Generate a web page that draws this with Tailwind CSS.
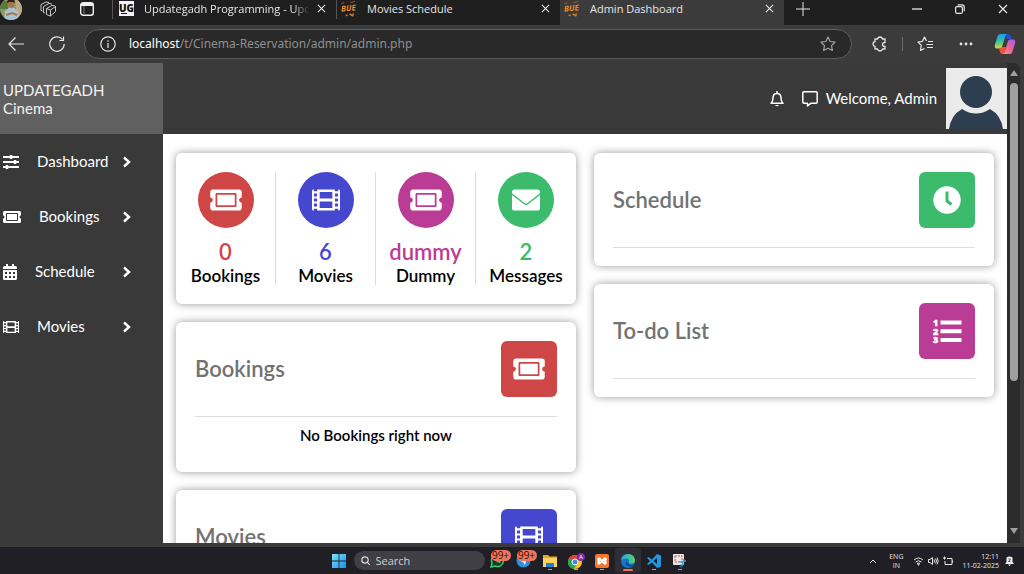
<!DOCTYPE html>
<html lang="en">

<head>
    <meta charset="UTF-8">
    <meta name="viewport" content="width=device-width, initial-scale=1.0">
    <script src="https://cdn.jsdelivr.net/npm/@tailwindcss/browser@4"></script>
    <title>Admin Dashboard</title>
</head>

<body class="h-screen flex flex-col overflow-hidden bg-[#3b3b3b] font-['Open_Sans','Noto_Sans',sans-serif] text-[#e6e6e6]">

    <!-- Shared icons -->
    <svg class="hidden">
        <symbol id="ticket" viewBox="0 0 576 512">
            <path d="M128 160h320v192H128V160zm400 96c0 26.51 21.49 48 48 48v96c0 26.51-21.49 48-48 48H48c-26.51 0-48-21.49-48-48v-96c26.51 0 48-21.49 48-48s-21.49-48-48-48v-96c0-26.51 21.49-48 48-48h480c26.51 0 48 21.49 48 48v96c-26.51 0-48 21.49-48 48zm-48-104c0-13.255-10.745-24-24-24H120c-13.255 0-24 10.745-24 24v208c0 13.255 10.745 24 24 24h336c13.255 0 24-10.745 24-24V152z" />
        </symbol>
        <symbol id="film" viewBox="0 0 512 512">
            <path fill-rule="evenodd" d="M24 64h8v20q0 12 12 12h40q12 0 12-12V64h320v20q0 12 12 12h40q12 0 12-12V64h8q24 0 24 24v336q0 24-24 24h-8v-20q0-12-12-12h-40q-12 0-12 12v20H96v-20q0-12-12-12H44q-12 0-12 12v20h-8q-24 0-24-24V88q0-24 24-24zM36 136v56h56v-56zM36 228v56h56v-56zM36 320v56h56v-56zM420 136v56h56v-56zM420 228v56h56v-56zM420 320v56h56v-56zM148 108h216q8 0 8 8v104q0 8-8 8H148q-8 0-8-8V116q0-8 8-8zM148 284h216q8 0 8 8v104q0 8-8 8H148q-8 0-8-8V292q0-8 8-8z" />
        </symbol>
        <symbol id="chevron" viewBox="0 0 10 14">
            <path d="M2 2.500l5 4.500-5 4.500" fill="none" stroke="currentColor" stroke-width="2.400" />
        </symbol>
        <symbol id="close" viewBox="0 0 10 10">
            <path d="M1 1l8 8M9 1l-8 8" fill="none" stroke="currentColor" stroke-width="1.200" />
        </symbol>
        <symbol id="bue" viewBox="0 0 16 16">
            <g transform="rotate(-6 8 8)">
                <text x="0" y="10" font-size="8" font-weight="bold" font-style="italic" font-family="Open Sans, sans-serif" fill="#e8892b">BUE</text>
                <path d="M1 2l3-1M10 2l5-1" stroke="#9a5a1c" />
                <path d="M4 14h2M8 13l3 2 1-2" stroke="#d97b22" stroke-width="1.500" fill="none" />
            </g>
        </symbol>
    </svg>

    <!-- Tab strip -->
    <header class="h-[25px] shrink-0 flex bg-[#1f1f1f] text-[11px] leading-4">
        <div class="w-28 shrink-0 flex items-center pb-2">
            <button class="w-6 h-4 flex items-center" aria-label="Profile">
                <svg class="w-[22px] h-6" viewBox="0 0 22 24">
                    <clipPath id="round"><circle cx="11" cy="12" r="11" /></clipPath>
                    <g clip-path="url(#round)">
                        <rect width="22" height="24" fill="#8c9a62" />
                        <path d="M0 4h8v8H0z" fill="#5c7a3c" />
                        <path d="M15 3h8v20h-6z" fill="#b8ab86" />
                        <path d="M4 24l1-10 4-3h5l4 3 1 10z" fill="#a9c4d6" />
                        <circle cx="11" cy="7" r="3.500" fill="#a8744f" />
                        <path d="M7 6q0-4 4-4t4 4l-2-1H9z" fill="#2a211d" />
                        <path d="M6 18l6-2 5 2" stroke="#a8744f" stroke-width="2" fill="none" />
                    </g>
                </svg>
            </button>
            <button class="ml-4" aria-label="Workspaces">
                <svg class="size-4" viewBox="0 0 16 16" fill="none" stroke="#c9c9c9" stroke-linejoin="round">
                    <path d="M6.500 7.500L12 4.500q3.500 0 3.500 1v5L10.500 15l-4-1.500zM6.500 7.500l4 1.500 5-3.500M10.500 9v6M5 12l-1.500-.500v-6L9 2.500l3 .500M2.500 10L1 9.500v-6L6 1l3 .500" />
                </svg>
            </button>
            <button class="ml-6" aria-label="Tab actions">
                <svg class="w-[14px] h-[14px]" viewBox="0 0 14 14" fill="none" stroke="#f0f0f0">
                    <rect x=".700" y=".700" width="12.600" height="12.600" rx="2.500" stroke-width="1.400" />
                    <path d="M1 2.500h12" stroke-width="3" />
                    <path d="M4 4v9" stroke="#777" />
                </svg>
            </button>
        </div>
        <div class="w-56 shrink-0 flex items-center pb-2 pr-2.5">
            <span class="w-px h-5 bg-[#555]"></span>
            <svg class="ml-1.5 size-[15px]" viewBox="0 0 15 15">
                <rect width="15" height="15" fill="#f4f4f4" />
                <text x="7.500" y="11" text-anchor="middle" font-size="10" font-weight="800" font-family="Open Sans, sans-serif" fill="#111">UG</text>
                <path d="M2 12.500h6" stroke="#111" />
            </svg>
            <span class="ml-2.5 flex-1 overflow-hidden whitespace-nowrap mask-r-from-90%">Updategadh Programming - Upda</span>
            <button class="ml-2" aria-label="Close tab"><svg class="size-[9px]"><use href="#close" /></svg></button>
        </div>
        <div class="w-56 shrink-0 flex items-center pb-2 pr-2.5">
            <span class="w-px h-5 bg-[#555]"></span>
            <svg class="ml-1 size-4"><use href="#bue" /></svg>
            <span class="ml-2.5 flex-1 whitespace-nowrap">Movies Schedule</span>
            <button aria-label="Close tab"><svg class="size-[9px]"><use href="#close" /></svg></button>
        </div>
        <div class="w-56 shrink-0 flex items-center pb-2 pl-1 pr-2.5 bg-[#3b3b3b]">
            <svg class="size-4"><use href="#bue" /></svg>
            <span class="ml-2.5 flex-1 whitespace-nowrap">Admin Dashboard</span>
            <button aria-label="Close tab"><svg class="size-[9px]"><use href="#close" /></svg></button>
        </div>
        <div class="flex-1 flex items-center pb-2 pl-3 pr-4">
            <button aria-label="New tab">
                <svg class="size-[14px]" viewBox="0 0 14 14" stroke="currentColor"><path d="M7 0v14M0 7h14" /></svg>
            </button>
            <div class="ml-auto flex items-center gap-[33px]">
                <button aria-label="Minimize"><svg class="size-[10px]" viewBox="0 0 10 10" stroke="currentColor" stroke-width="1.300"><path d="M0 5h10" /></svg></button>
                <button aria-label="Restore">
                    <svg class="size-[10px]" viewBox="0 0 10 10" fill="none" stroke="currentColor" stroke-width="1.200"><rect x=".600" y="2.600" width="6.800" height="6.800" rx="1.500" /><path d="M2.600.800H7q2.200 0 2.200 2.200v4.200" /></svg>
                </button>
                <button aria-label="Close"><svg class="size-[10px]"><use href="#close" /></svg></button>
            </div>
        </div>
    </header>

    <!-- Toolbar -->
    <nav class="h-[38px] shrink-0 flex items-center pl-2 pr-2">
        <button aria-label="Back">
            <svg class="size-4" viewBox="0 0 16 16" fill="none" stroke="currentColor" stroke-width="1.200"><path d="M16 8H1M7.500 1.500L1 8l6.500 6.500" /></svg>
        </button>
        <button class="ml-[25px]" aria-label="Refresh">
            <svg class="size-4" viewBox="0 0 16 16" fill="none" stroke="currentColor" stroke-width="1.200"><path d="M15.200 8A7.200 7.200 0 1 1 13.500 3.400M14.500.500V4.500H10.500" /></svg>
        </button>
        <form class="ml-[19px] flex-1 h-[30px] flex items-center rounded-full bg-[#292929] border border-[#5c5c5c] px-[15px] font-['Noto_Sans',sans-serif] text-[12px]">
            <svg class="size-4" viewBox="0 0 16 16" fill="none" stroke="currentColor" stroke-width="1.200"><circle cx="8" cy="8" r="7.200" /><path d="M8 7v5M8 4.200v1.600" /></svg>
            <a href="#" class="ml-[13px] text-[#8f8f8f] whitespace-nowrap"><span class="text-white">localhost</span>/t/Cinema-Reservation/admin/admin.php</a>
            <button type="button" class="ml-auto" aria-label="Favorite">
                <svg class="size-4" viewBox="0 0 16 16" fill="none" stroke="#a0a0a0" stroke-width="1.200" stroke-linejoin="round"><path d="M8 1l2.100 4.500 4.900.700-3.500 3.400.900 4.900L8 12.200l-4.400 2.300.900-4.900L1 6.200l4.900-.700z" /></svg>
            </button>
        </form>
        <button class="ml-5" aria-label="Extensions">
            <svg class="size-4" viewBox="0 0 16 16" fill="none" stroke="currentColor" stroke-width="1.300" stroke-linejoin="round"><path d="M3 3h2.500q.500-2 2.500-2t2.500 2H13v3.500q-2.500 0-2.500 2t2.500 2V13h-2.500q-.500 2-2.500 2t-2.500-2H3v-2.500Q1 10 1 8t2-2.500z" /></svg>
        </button>
        <span class="ml-3.5 w-px h-[14px] bg-[#6a6a6a]"></span>
        <button class="ml-3.5" aria-label="Favorites">
            <svg class="size-4" viewBox="0 0 16 16" fill="none" stroke="currentColor" stroke-width="1.200" stroke-linejoin="round"><path d="M9.500 5L7.500 1 5.500 5.300 1 6l3.300 3.300L3.500 14.500l4-2M11 5.500h5M9.500 8.500H16M10 11.500h6" /></svg>
        </button>
        <button class="ml-[26px]" aria-label="Settings and more">
            <svg class="w-[14px] h-1" viewBox="0 0 14 4" fill="currentColor"><circle cx="2" cy="2" r="1.400" /><circle cx="7" cy="2" r="1.400" /><circle cx="12" cy="2" r="1.400" /></svg>
        </button>
        <button class="ml-[21px]" aria-label="Copilot">
            <svg class="w-[22px] h-5" viewBox="0 0 22 20">
                <defs>
                    <linearGradient id="cpA" x1="0" y1="0" x2="0" y2="1"><stop offset="0" stop-color="#1d9bf0" /><stop offset=".500" stop-color="#35c3a4" /><stop offset="1" stop-color="#e6d22e" /></linearGradient>
                    <linearGradient id="cpB" x1="1" y1="0" x2="0" y2="1"><stop offset="0" stop-color="#a25cf0" /><stop offset=".500" stop-color="#ef5f9c" /><stop offset="1" stop-color="#ff9a56" /></linearGradient>
                </defs>
                <path d="M11 0h3q2 0 2.600 2l1 3H13z" fill="#1f4fd8" />
                <path d="M6 0h8q-2 0-2.600 2L8 13q-.500 1.500-2.500 1.500H3Q0 14.500 1 10.500l2.500-8Q4.300 0 6 0z" fill="url(#cpA)" />
                <path d="M5 14.500q2.500 0 3-1.500h4l-2 7H8q-1.500 0-2-2z" fill="#f0503c" />
                <path d="M16 20H8q2 0 2.600-2L14 7q.500-1.500 2.500-1.500H19q3 0 2 4l-2.500 8Q17.700 20 16 20z" fill="url(#cpB)" />
            </svg>
        </button>
    </nav>

    <!-- Page -->
    <div class="flex-1 min-h-0 flex font-[Lato,sans-serif] text-[15px] text-white">
        <aside class="w-[163px] shrink-0 bg-[#393939]">
            <div class="h-[71px] flex items-center bg-[#606060] pl-[3px] leading-[18px] text-[#f2f2f2]">UPDATEGADH<br>Cinema</div>
            <ul>
                <li><a href="#" class="h-[55px] flex items-center pl-[3px] pr-[31px]">
                        <svg class="size-4" viewBox="0 0 16 16" stroke="currentColor" stroke-width="2"><path d="M0 3h16M0 8h16M0 13h16" /><path d="M8 1v4M12 6v4M4 11v4" stroke-width="2.500" /></svg>
                        <span class="ml-[18px] flex-1">Dashboard</span>
                        <svg class="w-[10px] h-[14px]"><use href="#chevron" /></svg>
                    </a></li>
                <li><a href="#" class="h-[55px] flex items-center pl-[3px] pr-[31px]">
                        <svg class="w-[18px] h-4" fill="currentColor"><use href="#ticket" /></svg>
                        <span class="ml-[18px] flex-1">Bookings</span>
                        <svg class="w-[10px] h-[14px]"><use href="#chevron" /></svg>
                    </a></li>
                <li><a href="#" class="h-[55px] flex items-center pl-[3px] pr-[31px]">
                        <svg class="w-[14px] h-4" viewBox="0 0 14 16" fill="currentColor"><path fill-rule="evenodd" d="M3 0h2v2h4V0h2v2h1.500Q14 2 14 3.500V5H0V3.500Q0 2 1.500 2H3zM0 6h14v8.500q0 1.500-1.500 1.500h-11Q0 16 0 14.500zM2 8v2h2V8zM6 8v2h2V8zM10 8v2h2V8zM2 12v2h2v-2zM6 12v2h2v-2zM10 12v2h2v-2z" /></svg>
                        <span class="ml-[18px] flex-1">Schedule</span>
                        <svg class="w-[10px] h-[14px]"><use href="#chevron" /></svg>
                    </a></li>
                <li><a href="#" class="h-[55px] flex items-center pl-[3px] pr-[31px]">
                        <svg class="size-4" fill="currentColor"><use href="#film" /></svg>
                        <span class="ml-[18px] flex-1">Movies</span>
                        <svg class="w-[10px] h-[14px]"><use href="#chevron" /></svg>
                    </a></li>
            </ul>
        </aside>

        <main class="flex-1 min-w-0 flex flex-col bg-white overflow-hidden">
            <div class="h-[71px] shrink-0 flex items-center justify-end bg-[#393939]">
                <svg class="w-[14px] h-4" viewBox="0 0 14 16" fill="none" stroke="currentColor" stroke-width="1.500" stroke-linejoin="round"><path d="M7 0v2M1 12.200q2-1.700 2-5.200 0-4.500 4-4.500t4 4.500q0 3.500 2 5.200z" /><path d="M5 14q2 2.500 4 0z" fill="currentColor" stroke="none" /></svg>
                <svg class="ml-[18px] size-4" viewBox="0 0 16 16" fill="none" stroke="currentColor" stroke-width="1.500" stroke-linejoin="round"><path d="M2 .800h12q1.200 0 1.200 1.200v9q0 1.200-1.200 1.200H9L5.500 15v-2.800H2Q.800 12.200.800 11V2Q.800.800 2 .800z" /></svg>
                <span class="ml-2">Welcome, Admin</span>
                <svg class="ml-[9px] size-[61px]" viewBox="0 0 61 61">
                    <rect width="61" height="61" fill="#ebebeb" />
                    <path d="M3 61Q5 47 16 41q14 9 28 0 11 6 13 20z" fill="#2c3e50" />
                    <circle cx="30" cy="24" r="16" fill="#2c3e50" />
                </svg>
            </div>

            <div class="grid grid-cols-2 items-start gap-[18px] px-[13px] pt-[19px] text-black">
                <div class="flex flex-col gap-[18px]">
                    <section class="grid grid-cols-4 rounded-md bg-white py-[19px] shadow-[0_0_8px_rgba(0,0,0,0.4)] text-center divide-x divide-[#ddd]">
                        <div class="flex flex-col items-center">
                            <span class="size-14 rounded-full bg-[#cf4647] flex items-center justify-center"><svg class="w-8 h-7" fill="#fff"><use href="#ticket" /></svg></span>
                            <span class="mt-2.5 text-[22px] leading-7 font-semibold text-[#cf4647]">0</span>
                            <h3 class="text-[17px] leading-[19px] font-semibold">Bookings</h3>
                        </div>
                        <div class="flex flex-col items-center">
                            <span class="size-14 rounded-full bg-[#4547cf] flex items-center justify-center"><svg class="size-7" fill="#fff"><use href="#film" /></svg></span>
                            <span class="mt-2.5 text-[22px] leading-7 font-semibold text-[#4547cf]">6</span>
                            <h3 class="text-[17px] leading-[19px] font-semibold">Movies</h3>
                        </div>
                        <div class="flex flex-col items-center">
                            <span class="size-14 rounded-full bg-[#bb3c95] flex items-center justify-center"><svg class="w-8 h-7" fill="#fff"><use href="#ticket" /></svg></span>
                            <span class="mt-2.5 text-[22px] leading-7 font-semibold text-[#bb3c95]">dummy</span>
                            <h3 class="text-[17px] leading-[19px] font-semibold">Dummy</h3>
                        </div>
                        <div class="flex flex-col items-center">
                            <span class="size-14 rounded-full bg-[#3cbb6c] flex items-center justify-center"><svg class="size-7" viewBox="0 0 512 512" fill="#fff"><path d="M48 64h416q48 0 48 48v20L270 318q-14 10-28 0L0 132v-20q0-48 48-48zM0 164l232 178q24 16 48 0l232-178v236q0 48-48 48H48q-48 0-48-48z" /></svg></span>
                            <span class="mt-2.5 text-[22px] leading-7 font-semibold text-[#3cbb6c]">2</span>
                            <h3 class="text-[17px] leading-[19px] font-semibold">Messages</h3>
                        </div>
                    </section>

                    <section class="rounded-md bg-white px-[19px] pt-[19px] pb-[27px] shadow-[0_0_8px_rgba(0,0,0,0.4)]">
                        <div class="flex items-center justify-between pb-[19px] border-b border-[#ddd]">
                            <h2 class="text-[22px] leading-7 font-semibold text-[#727272]">Bookings</h2>
                            <span class="size-14 rounded-md bg-[#cf4647] flex items-center justify-center"><svg class="w-8 h-7" fill="#fff"><use href="#ticket" /></svg></span>
                        </div>
                        <p class="mt-2 text-center text-[15px] leading-5 font-semibold">No Bookings right now</p>
                    </section>

                    <section class="rounded-md bg-white p-[19px] shadow-[0_0_8px_rgba(0,0,0,0.4)]">
                        <div class="flex items-center justify-between pb-[19px] border-b border-[#ddd]">
                            <h2 class="text-[22px] leading-7 font-semibold text-[#727272]">Movies</h2>
                            <span class="size-14 rounded-md bg-[#4547cf] flex items-center justify-center"><svg class="size-7" fill="#fff"><use href="#film" /></svg></span>
                        </div>
                    </section>
                </div>

                <div class="flex flex-col gap-[18px]">
                    <section class="rounded-md bg-white px-[19px] pt-[19px] pb-[18px] shadow-[0_0_8px_rgba(0,0,0,0.4)]">
                        <div class="flex items-center justify-between pb-[19px] border-b border-[#ddd]">
                            <h2 class="text-[22px] leading-7 font-semibold text-[#727272]">Schedule</h2>
                            <span class="size-14 rounded-md bg-[#3cbb6c] flex items-center justify-center"><svg class="size-7" viewBox="0 0 28 28"><circle cx="14" cy="14" r="13.700" fill="#fff" /><path d="M14 5.500V15l4.500 3.500" fill="none" stroke="#3cbb6c" stroke-width="3" stroke-linejoin="round" /></svg></span>
                        </div>
                    </section>

                    <section class="rounded-md bg-white px-[19px] pt-[19px] pb-[18px] shadow-[0_0_8px_rgba(0,0,0,0.4)]">
                        <div class="flex items-center justify-between pb-[19px] border-b border-[#ddd]">
                            <h2 class="text-[22px] leading-7 font-semibold text-[#727272]">To-do List</h2>
                            <span class="size-14 rounded-md bg-[#bb3c95] flex items-center justify-center">
                                <svg class="w-[30px] h-7" viewBox="0 0 30 28" fill="#fff">
                                    <path d="M8.500 3.500h21v4h-21zM8.500 12.200h21v4h-21zM8.500 21h21v4h-21z" />
                                    <g font-family="Open Sans, sans-serif" font-weight="800" font-size="9" stroke="#fff" stroke-width=".400">
                                        <text x="1" y="9">1</text>
                                        <text x="1" y="18">2</text>
                                        <text x="1" y="26">3</text>
                                    </g>
                                </svg>
                            </span>
                        </div>
                    </section>
                </div>
            </div>
        </main>

        <!-- Scrollbar -->
        <div class="mr-1 w-[13px] shrink-0 flex flex-col items-center rounded-tr-md bg-[#2c2c2c] pt-1.5 pb-2">
            <svg class="w-[10px] h-2" viewBox="0 0 10 8"><path d="M5 1l4 6H1z" fill="#9f9f9f" /></svg>
            <div class="my-1.5 flex-1 w-2"><div class="h-[68%] rounded-full bg-[#9f9f9f]"></div></div>
            <svg class="w-[10px] h-2" viewBox="0 0 10 8"><path d="M5 7l4-6H1z" fill="#9f9f9f" /></svg>
        </div>
    </div>

    <!-- Taskbar -->
    <footer class="mt-1 h-[27px] shrink-0 grid grid-cols-[1fr_auto_1fr] items-center bg-[#201f25]">
        <div></div>
        <div class="flex items-center">
            <button aria-label="Start">
                <svg class="size-[14px]" viewBox="0 0 14 14"><defs><linearGradient id="win" x1="0" y1="0" x2="1" y2="1"><stop offset="0" stop-color="#7fe0fb" /><stop offset="1" stop-color="#1593e6" /></linearGradient></defs><path d="M0 0h6.600v6.600H0zM7.400 0H14v6.600H7.400zM0 7.400h6.600V14H0zM7.400 7.400H14V14H7.400z" fill="url(#win)" /></svg>
            </button>
            <label class="ml-2 w-[131px] h-[19px] flex items-center rounded-full bg-[#403f45] pl-[7px] pr-2">
                <svg class="size-[9px] shrink-0" viewBox="0 0 9 9" fill="none" stroke="#ddd" stroke-width="1.200"><circle cx="4" cy="4" r="3.200" /><path d="M6.200 6.200L9 9" /></svg>
                <input type="text" placeholder="Search" aria-label="Search" class="ml-1.5 w-full bg-transparent text-[11px] leading-4 placeholder:text-[#d0d0d0] outline-none">
            </label>
            <button class="relative w-[26px] h-[27px] flex items-center justify-center" aria-label="WhatsApp">
                <svg class="size-[15px]" viewBox="0 0 15 15"><path d="M1 14l1-4A6 6 0 1 1 5 13z" fill="#183a26" stroke="#2bd366" stroke-width="1.500" /><path d="M5 5q0 4.500 5 5l1-1.500-2-1-1 1-1.500-1.500 1-1-1-2z" fill="#2bd366" /></svg>
                <span class="absolute left-1.5 top-[3px] h-[11px] w-5 rounded-full bg-[#f0745c] text-[10px] leading-[11px] text-[#2a1512] text-center">99+</span>
            </button>
            <button class="relative w-[26px] h-[27px] flex items-center justify-center" aria-label="Telegram">
                <svg class="size-[15px]" viewBox="0 0 15 15"><circle cx="7.500" cy="7.500" r="7" fill="#2f8fe0" /><path d="M3 7l8-3-2 8-2-3z" fill="#fff" /></svg>
                <span class="absolute left-1.5 top-[3px] h-[11px] w-5 rounded-full bg-[#f0745c] text-[10px] leading-[11px] text-[#2a1512] text-center">99+</span>
            </button>
            <button class="relative w-[26px] h-[27px] flex items-center justify-center" aria-label="File Explorer">
                <svg class="w-[14px] h-3" viewBox="0 0 14 12"><path d="M0 0h5l1.500 1.500H14V12H0z" fill="#e9a825" /><path d="M0 3h14v9H0z" fill="#fcd462" /><path d="M3 8h8v4H3z" fill="#1f7fd0" /></svg>
                <span class="absolute bottom-1 h-px w-1 bg-[#aaa]"></span>
            </button>
            <button class="relative w-[26px] h-[27px] flex items-center justify-center" aria-label="Chrome">
                <svg class="w-[18px] h-4" viewBox="0 0 18 16"><circle cx="8" cy="9" r="7" fill="#fbc116" /><path d="M8 9L2 5.500A7 7 0 0 1 14 5.500z" fill="#e33b2e" /><path d="M8 9L2 5.500A7 7 0 0 0 7 16l3-5z" fill="#23a455" /><circle cx="8" cy="9" r="3" fill="#4285f4" stroke="#fff" /><circle cx="14" cy="4" r="4" fill="#7b2fa5" /><text x="12" y="6" font-size="6" font-family="Open Sans, sans-serif" fill="#fff">A</text></svg>
                <span class="absolute bottom-1 h-px w-1 bg-[#aaa]"></span>
            </button>
            <button class="relative w-[26px] h-[27px] flex items-center justify-center" aria-label="XAMPP">
                <svg class="size-[14px]" viewBox="0 0 14 14"><rect width="14" height="14" rx="2" fill="#f0782c" /><path d="M4 4l6 6M10 4l-6 6M4 4q-2 1 0 3-2 2 0 3M10 4q2 1 0 3 2 2 0 3" stroke="#fff" stroke-width="1.800" fill="none" /></svg>
                <span class="absolute bottom-1 h-px w-1 bg-[#aaa]"></span>
            </button>
            <button class="relative w-[26px] h-[25px] rounded bg-[#2f2e34] flex items-center justify-center" aria-label="Edge">
                <svg class="size-[14px]" viewBox="0 0 14 14"><defs><linearGradient id="edge" x1="0" y1="0" x2="1" y2="0"><stop offset="0" stop-color="#2aa9e8" /><stop offset="1" stop-color="#56d364" /></linearGradient></defs><circle cx="7" cy="7" r="7" fill="#1476c6" /><path d="M0 6Q1 0 7 0t7 6q0 3.500-4 3.500-2.500 0-2-1.500Q9 5 5.500 4.500 2 4.500 0 6z" fill="url(#edge)" /><path d="M5 7q-1 4 3 5.500 3 .500 5-2-2 1-4 .500Q6 10 5 7z" fill="#10438f" /></svg>
                <span class="absolute bottom-0.5 h-0.5 w-[10px] rounded-full bg-[#f0745c]"></span>
            </button>
            <button class="relative w-[26px] h-[27px] flex items-center justify-center" aria-label="Visual Studio Code">
                <svg class="size-[14px]" viewBox="0 0 14 14"><path d="M10 0l4 1.500v11L10 14 5 8.500 1.500 11 0 10l3-3-3-3 1.500-1L5 5.500zM10 4L6.500 7 10 10z" fill="#2196e3" fill-rule="evenodd" /></svg>
                <span class="absolute bottom-1 h-px w-1 bg-[#aaa]"></span>
            </button>
            <button class="relative w-[26px] h-[27px] flex items-center justify-center" aria-label="Snipping Tool">
                <svg class="size-[15px]" viewBox="0 0 15 15"><rect x="1" y="1" width="11" height="11" rx="1" fill="#e8e8e8" /><rect x="3" y="3" width="7" height="6" fill="none" stroke="#d24a3a" stroke-dasharray="2 1" /><path d="M8 9l6-1M12 6l-2 7" stroke="#3aa0d8" stroke-width="1.500" /><circle cx="9" cy="13" r="1.500" fill="#20628e" /></svg>
                <span class="absolute bottom-1 h-px w-1 bg-[#aaa]"></span>
            </button>
        </div>
        <div class="flex items-center justify-end pr-[10px] text-[7px] leading-[9px]">
            <svg class="size-2" viewBox="0 0 8 8" fill="none" stroke="currentColor"><path d="M1 6l3-3 3 3" /></svg>
            <div class="ml-3 text-center">ENG<br>IN</div>
            <svg class="ml-[10px] w-[11px] h-[10px]" viewBox="0 0 11 10" fill="none" stroke="currentColor"><path d="M1 4q4.500-4 9 0M2.500 6q3-2.500 6 0M4 7.500q1.500-1 3 0" /><circle cx="5.500" cy="8.500" r=".600" fill="currentColor" /></svg>
            <svg class="ml-1 w-[11px] h-[10px]" viewBox="0 0 11 10" fill="none" stroke="currentColor"><path d="M.500 3.500h1.500L4.500 1.500v7L2 6.500H.500zM6 3.500q1 1.500 0 3M7.500 2.500q2 2.500 0 5M9 1.500q2.500 3.500 0 7" /></svg>
            <svg class="ml-1 w-[11px] h-[10px]" viewBox="0 0 11 10" fill="none" stroke="currentColor"><path d="M4 2.500h5v6H2V5M9.500 4.500v2M0 2h3M1.500 .500v3" /></svg>
            <div class="ml-2 text-right">12:11<br>11-02-2025</div>
            <svg class="ml-1.5 w-[9px] h-[10px]" viewBox="0 0 9 10" fill="#eee"><path d="M1.500 1.500q3-2 6 0V6L9 8H0l1.500-2zM3 8.500h3L4.500 10z" /><path d="M3.500 3h2l-2 2.500h2" fill="none" stroke="#333" stroke-width=".800" /></svg>
        </div>
    </footer>
</body>

</html>
